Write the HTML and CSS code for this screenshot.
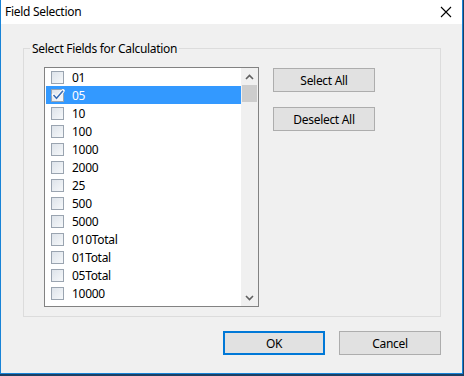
FILE: index.html
```html
<!DOCTYPE html>
<html>
<head>
<meta charset="utf-8">
<link rel="stylesheet" href="styles.css">
</head>
<body>
<div class="window">
  <div class="titlebar">
    <span class="title">Field Selection</span>
    <svg class="close" width="12" height="12" viewBox="0 0 12 12"><path d="M1 1L11 11M11 1L1 11" stroke="#000" stroke-width="1.1" fill="none"/></svg>
  </div>
  <div class="client">
    <fieldset class="group">
      <legend class="legend">Select Fields for Calculation</legend>
      <div class="group-inner">
        <div class="listbox">
          <div class="rows">
            <div class="row"><span class="cb"></span><span class="lbl">01</span></div>
            <div class="row sel"><span class="cb"><svg width="14" height="14" viewBox="0 0 14 14"><path d="M2.5 7L5.5 10.2L12 2.8" stroke="#fff" stroke-width="3.4" fill="none" stroke-linejoin="round" stroke-linecap="round"/><path d="M2.5 7L5.5 10.2L12 2.8" stroke="#3b6fb6" stroke-width="1.6" fill="none"/></svg></span><span class="lbl">05</span></div>
            <div class="row"><span class="cb"></span><span class="lbl">10</span></div>
            <div class="row"><span class="cb"></span><span class="lbl">100</span></div>
            <div class="row"><span class="cb"></span><span class="lbl">1000</span></div>
            <div class="row"><span class="cb"></span><span class="lbl">2000</span></div>
            <div class="row"><span class="cb"></span><span class="lbl">25</span></div>
            <div class="row"><span class="cb"></span><span class="lbl">500</span></div>
            <div class="row"><span class="cb"></span><span class="lbl">5000</span></div>
            <div class="row"><span class="cb"></span><span class="lbl">010Total</span></div>
            <div class="row"><span class="cb"></span><span class="lbl">01Total</span></div>
            <div class="row"><span class="cb"></span><span class="lbl">05Total</span></div>
            <div class="row"><span class="cb"></span><span class="lbl">10000</span></div>
          </div>
          <div class="scrollbar">
            <div class="arrow"><svg width="9" height="6" viewBox="0 0 9 6"><path d="M1 5L4.5 1.5L8 5" stroke="#606060" stroke-width="1.6" fill="none"/></svg></div>
            <div class="thumb"></div>
            <div class="track"></div>
            <div class="arrow"><svg width="9" height="6" viewBox="0 0 9 6"><path d="M1 1L4.5 4.5L8 1" stroke="#606060" stroke-width="1.6" fill="none"/></svg></div>
          </div>
        </div>
        <div class="side-buttons">
          <button class="btn">Select All</button>
          <button class="btn">Deselect All</button>
        </div>
      </div>
    </fieldset>
    <div class="footer">
      <button class="btn default">OK</button>
      <button class="btn">Cancel</button>
    </div>
  </div>
</div>
</body>
</html>
```

FILE: styles.css
```css
html, body {
  margin: 0;
  padding: 0;
}
body {
  width: 464px;
  height: 376px;
  background: #1c3f63;
  font-family: "Noto Sans", "Open Sans", "DejaVu Sans", sans-serif;
  font-size: 12px;
  letter-spacing: -0.3px;
  color: #000;
  overflow: hidden;
}
.window {
  width: 461px;
  height: 373px;
  border: 1px solid #1883d7;
  border-top: none;
  background: #f0f0f0;
  display: flex;
  flex-direction: column;
}
.titlebar {
  height: 24px;
  box-sizing: border-box;
  background: #fff;
  display: flex;
  align-items: center;
  justify-content: space-between;
  padding: 0 10px 2px 4px;
  flex: none;
}
.title {
  font-size: 12px;
}
.close {
  display: block;
  margin-top: 2px;
}
.client {
  flex: 1;
  padding: 16px 21px 0 22px;
  display: flex;
  flex-direction: column;
}
.group {
  margin: 0;
  border: 1px solid #dcdcdc;
  padding: 11px 0 9px 20px;
  min-width: 0;
}
.legend {
  padding: 2px 2px 0;
  margin-left: -14px;
  line-height: 14px;
}
.group-inner {
  display: flex;
  gap: 14px;
  align-items: flex-start;
}
.listbox {
  width: 215px;
  height: 240px;
  box-sizing: border-box;
  border: 1px solid #828282;
  background: #fff;
  display: flex;
}
.rows {
  flex: 1;
  padding-left: 1px;
}
.row {
  height: 18px;
  display: flex;
  align-items: center;
  padding-left: 5px;
}
.row.sel {
  background: #3399ff;
  color: #fff;
}
.cb {
  width: 13px;
  height: 13px;
  box-sizing: border-box;
  border: 1px solid #9aa4b0;
  background: linear-gradient(135deg, #dde3ea 0%, #f6f8fa 100%);
  display: block;
  flex: none;
}
.cb svg {
  display: block;
  margin: -2px 0 0 -1px;
}
.lbl {
  margin-left: 8px;
  line-height: 16px;
  padding-top: 2px;
}
.scrollbar {
  width: 17px;
  background: #f0f0f0;
  display: flex;
  flex-direction: column;
  flex: none;
}
.arrow {
  height: 17px;
  display: flex;
  align-items: center;
  justify-content: center;
  flex: none;
}
.arrow svg {
  display: block;
}
.thumb {
  height: 17px;
  margin: 0 1px;
  background: #cdcdcd;
  flex: none;
}
.track {
  flex: 1;
}
.side-buttons {
  display: flex;
  flex-direction: column;
  gap: 15px;
  padding-top: 1px;
}
.btn {
  width: 102px;
  height: 24px;
  box-sizing: border-box;
  border: 1px solid #adadad;
  background: #e1e1e1;
  font-family: inherit;
  font-size: 12px;
  letter-spacing: -0.3px;
  color: #000;
  padding: 0;
  margin: 0;
}
.btn.default {
  border: 2px solid #0078d7;
}
.footer {
  display: flex;
  justify-content: flex-end;
  gap: 14px;
  padding-top: 14px;
}
```
